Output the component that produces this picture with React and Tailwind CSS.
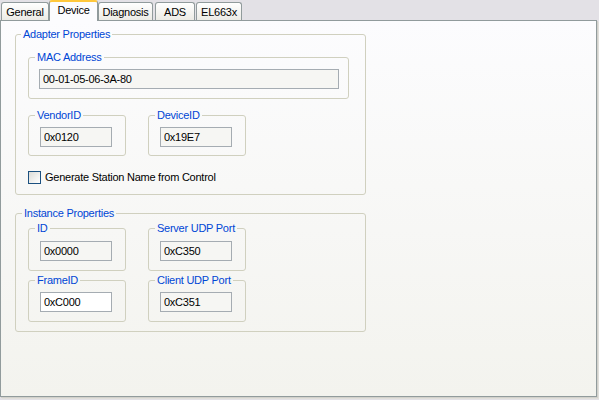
import React from 'react';

const tabs = [
  { label: 'General', w: 'w-[48px]', ml: 'ml-[1px]' },
  { label: 'Device', w: 'w-[49px]', ml: 'ml-0', active: true },
  { label: 'Diagnosis', w: 'w-[55px]', ml: 'ml-0' },
  { label: 'ADS', w: 'w-[40px]', ml: 'ml-[2px]' },
  { label: 'EL663x', w: 'w-[46px]', ml: 'ml-[1px]' },
];

function Tab({ label, w, ml, active }) {
  if (active) {
    return (
      <div
        className={`${w} ${ml} relative z-10 -mb-[1px] h-[21px] rounded-t-[3px] border-x border-t-2 border-x-[#919b9c] border-t-[#ffc83c] bg-[#fcfcfe] pt-[1px] text-center leading-[14px]`}
      >
        {label}
      </div>
    );
  }
  return (
    <div
      className={`${w} ${ml} h-[18px] rounded-t-[3px] border border-b-0 border-[#919b9c] bg-gradient-to-b from-white to-[#ecebe5] pt-[2px] text-center leading-[14px]`}
    >
      {label}
    </div>
  );
}

// XP style group box: fieldset + legend gives the gap in the top border
function GroupBox({ label, className, legendClass = 'ml-[6px]', bodyClass, children }) {
  return (
    <fieldset className={`rounded-[3px] border border-[#d0d0bf] ${className}`}>
      <legend className={`${legendClass} px-[2px] leading-[13px] text-[#0046d5]`}>{label}</legend>
      <div className={bodyClass}>{children}</div>
    </fieldset>
  );
}

function Field({ value, width = 'w-[72px]', editable }) {
  return (
    <input
      readOnly
      value={value}
      className={`${width} block h-[20px] border pl-[3px] leading-[18px] text-black outline-none ${
        editable ? 'border-[#a5acb2] bg-white' : 'border-[#a5acb2] bg-[#f6f6f3]'
      }`}
    />
  );
}

function SmallGroup({ label, value, editable, className = '', bodyClass = 'pt-[5px] pb-[9px] pl-[11px]' }) {
  return (
    <GroupBox label={label} className={`w-[98px] ${className}`} bodyClass={bodyClass}>
      <Field value={value} editable={editable} />
    </GroupBox>
  );
}

export default function App() {
  return (
    <div className="h-[400px] w-[599px] overflow-hidden bg-[#e3e1e6] font-['Liberation_Sans',Arial,sans-serif] text-[11px] tracking-[-0.25px] text-black">
      <div className="flex h-[20px] items-end">
        {tabs.map((t) => (
          <Tab key={t.label} {...t} />
        ))}
      </div>

      <div className="h-[377px] w-[597px] border border-[#919b9c] bg-gradient-to-b from-[#fcfcfe] to-[#f3f3ee] shadow-[1px_1px_0_#d2d1cc,2px_2px_0_#e0dfda]">
        <GroupBox
          label="Adapter Properties"
          className="ml-[14px] mt-[7px] w-[351px]"
          legendClass="ml-[5px]"
          bodyClass="pt-[10px] pb-[10px] pl-[12px]"
        >
          <GroupBox label="MAC Address" className="w-[321px]" bodyClass="pt-[5px] pb-[9px] pl-[10px]">
            <Field value="00-01-05-06-3A-80" width="w-[300px]" />
          </GroupBox>

          <div className="mt-[10px] flex gap-[22px]">
            <SmallGroup label="VendorID" value="0x0120" bodyClass="pt-[5px] pb-[8px] pl-[11px]" />
            <SmallGroup label="DeviceID" value="0x19E7" bodyClass="pt-[5px] pb-[8px] pl-[11px]" />
          </div>

          <label className="mt-[15px] flex h-[13px] items-center">
            <span className="h-[13px] w-[13px] border border-[#1c5180] bg-gradient-to-br from-[#dcdcd7] to-white" />
            <span className="ml-[4px] leading-[13px]">Generate Station Name from Control</span>
          </label>
        </GroupBox>

        <GroupBox
          label="Instance Properties"
          className="ml-[14px] mt-[12px] w-[351px]"
          bodyClass="pt-[2px] pb-[9px] pl-[12px]"
        >
          <div className="flex gap-[22px]">
            <SmallGroup label="ID" value="0x0000" bodyClass="pt-[6px] pb-[9px] pl-[11px]" />
            <SmallGroup label="Server UDP Port" value="0xC350" bodyClass="pt-[6px] pb-[9px] pl-[11px]" />
          </div>
          <div className="mt-[3px] flex gap-[22px]">
            <SmallGroup label="FrameID" value="0xC000" editable />
            <SmallGroup label="Client UDP Port" value="0xC351" />
          </div>
        </GroupBox>
      </div>
    </div>
  );
}
